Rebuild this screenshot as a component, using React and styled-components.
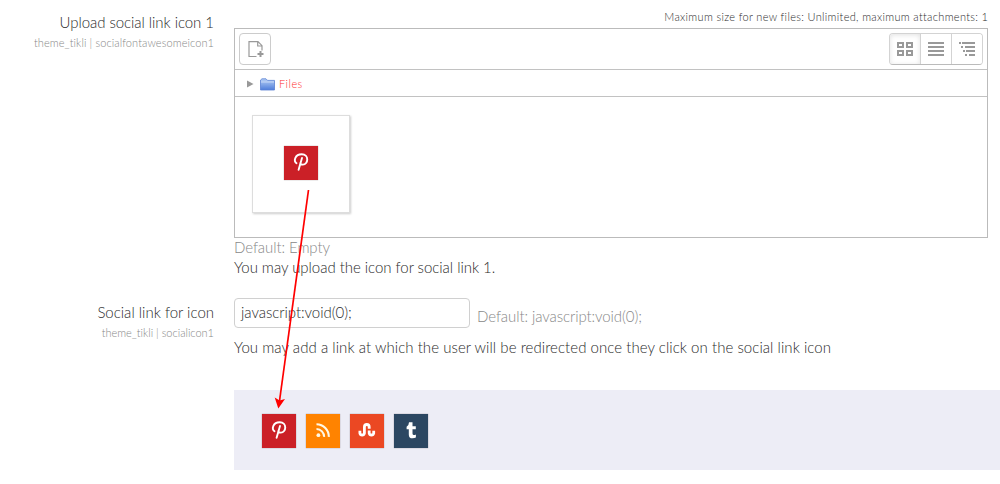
import React from "react";
import styled, { createGlobalStyle } from "styled-components";

const Global = createGlobalStyle`
  * { box-sizing: border-box; }
  html, body { margin: 0; background: #fff; }
  body {
    font-family: Lato, "Open Sans", sans-serif;
    font-weight: 300;
    font-size: 15px;
    font-variant-ligatures: none;
    color: #333;
    overflow: hidden;
  }
`;

const Page = styled.main`
  position: relative;
  width: 1000px;
  height: 484px;
  overflow: hidden;
`;

const Setting = styled.section`
  display: grid;
  grid-template-columns: 214px 754px;
  column-gap: 20px;
  height: ${(p) => p.$height}px;
`;

const LabelColumn = styled.div`
  padding-top: ${(p) => p.$top}px;
  text-align: right;
`;

const Line = styled.div`
  height: ${(p) => p.$height || 20}px;
  line-height: ${(p) => p.$height || 20}px;
  white-space: nowrap;
`;

const Text = styled.span`
  display: inline-block;
  letter-spacing: ${(p) => p.$track || 0}px;
  margin-right: ${(p) => -(p.$track || 0)}px;
  font-size: ${(p) => (p.$small ? 11 : 15)}px;
  color: ${(p) => p.$color || "#2b2b2b"};
  white-space: nowrap;
`;

const Restrictions = styled.div`
  height: 28px;
  padding-top: 5px;
  line-height: 20px;
  text-align: right;
`;

const FileManager = styled.div`
  height: 210px;
  margin-bottom: -1px;
  border: 1px solid #bbb;
`;

const Toolbar = styled.div`
  display: flex;
  justify-content: space-between;
  height: 41px;
  padding: 4px;
  border-bottom: 1px solid #c2c2c2;
`;

const AddButton = styled.button`
  display: flex;
  align-items: center;
  justify-content: center;
  width: 32px;
  height: 32px;
  padding: 0 0 0 1px;
  background: #fff;
  border: 1px solid #ccc;
  border-radius: 4px;
`;

const ViewGroup = styled.div`
  display: flex;
  width: 94px;
  height: 32px;
  border: 1px solid #d3d3d3;
  border-bottom-color: #bbb;
  border-radius: 4px;
  overflow: hidden;
`;

const ViewButton = styled.button`
  display: flex;
  flex: 1;
  align-items: center;
  justify-content: center;
  padding: 0;
  border: 0;
  background: #fff;
  box-shadow: ${(p) => (p.$active ? "inset 0 1px 5px rgba(0,0,0,.12)" : "none")};
  & + & { border-left: 1px solid #d3d3d3; }
`;

const PathBar = styled.div`
  display: flex;
  align-items: center;
  height: 27px;
  padding: 2px 0 0 12px;
  line-height: 16px;
  border-bottom: 1px solid #c2c2c2;
`;

const FolderLabel = styled.div`
  padding-bottom: 2px;
`;

const Folder = styled.svg`
  margin: 0 4px 0 6px;
`;

const FileArea = styled.div`
  padding: 18px 17px;
`;

const Thumbnail = styled.div`
  display: flex;
  align-items: center;
  justify-content: center;
  width: 98px;
  height: 98px;
  padding: 0 1px 2px 0;
  border: 1px solid #ddd;
  box-shadow: 1px 1px 2px rgba(0, 0, 0, 0.2);
`;

const InputRow = styled.div`
  display: flex;
  gap: 7px;
  height: 30px;
`;

const Field = styled.div`
  width: 236px;
  height: 30px;
  padding-left: 6px;
  line-height: 26px;
  border: 1px solid #d0d0d0;
  border-radius: 4px;
`;

const Hint = styled.div`
  padding-top: 8px;
  line-height: 20px;
`;

const Description = styled.div`
  padding-top: 9px;
  line-height: 20px;
`;

const Band = styled.footer`
  display: flex;
  gap: 10px;
  height: 80px;
  margin-left: 234px;
  padding: 24px 28px;
  background: #ededf6;
`;

const Tile = styled.svg`
  display: block;
  width: 34px;
  height: 34px;
  background: ${(p) => p.$color};
  box-shadow: 0 0 1px rgba(80, 60, 60, 0.6);
`;

const Arrow = styled.svg`
  position: absolute;
  left: 0;
  top: 0;
  pointer-events: none;
`;

const Pinterest = () => (
  <Tile $color="#cb2027" viewBox="0 0 34 34">
    <path
      d="M12.5 17.3 C9.3 15 11 8.3 17.7 8.3 C25.4 8.3 24.4 18.6 18.8 18.6 C17.5 18.6 16.4 17.8 16.3 17.1 M18 12 L14.6 23.8"
      fill="none"
      stroke="#fff"
      strokeWidth="1.9"
      strokeLinecap="round"
    />
  </Tile>
);

const Rss = () => (
  <Tile $color="#ff8300" viewBox="0 0 34 34">
    <circle cx="12.4" cy="21.2" r="1.9" fill="#fff8e5" />
    <path
      d="M10.5 15 A7.7 7.7 0 0 1 18.1 22.9 M10.5 10.2 A12.4 12.4 0 0 1 22.8 22.9"
      fill="none"
      stroke="#fff8e5"
      strokeWidth="2.1"
    />
  </Tile>
);

const StumbleUpon = () => (
  <Tile $color="#eb4823" viewBox="0 0 34 34">
    <path
      d="M9.9 16.8 V19.2 A2.3 2.3 0 0 0 14.4 19.2 V12.9 A2.4 2.4 0 0 1 19.2 12.9 V14.8 M19.2 16.4 V19.2 A2.3 2.3 0 0 0 23.7 19.2 V16.8"
      fill="none"
      stroke="#fff"
      strokeWidth="2.8"
    />
  </Tile>
);

const Tumblr = () => (
  <Tile $color="#2c4762" viewBox="0 0 34 34">
    <path
      d="M15 8.3 H18.5 V12.3 H21.8 V15.3 H18.5 V19.4 Q18.5 21.1 20 21.1 Q20.9 21.1 21.9 20.6 V23.6 Q20.6 24.3 18.5 24.3 Q14.8 24.3 14.8 20.4 V15.3 H12.6 V12.8 Q14.9 11.8 15 8.3 Z"
      fill="#fff"
    />
  </Tile>
);

const AddIcon = () => (
  <svg width="16" height="17" viewBox="0 0 16 17">
    <path d="M8.5 15.5 H1 V.7 H10 L14 4.7 V9.5 M9.7 1 V5 H14" fill="none" stroke="#999" strokeWidth="1.2" />
    <path d="M12.5 10 V16 M9.5 13 H15.5" stroke="#999" strokeWidth="2" />
  </svg>
);

const GridIcon = () => (
  <svg width="16" height="14" fill="none" stroke="#999" strokeWidth="2">
    <path d="M1 1H6V5H1Z M10 1H15V5H10Z M1 9H6V13H1Z M10 9H15V13H10Z" />
  </svg>
);

const ListIcon = () => (
  <svg width="16" height="14" stroke="#999" strokeWidth="2">
    <path d="M0 1H16 M0 5H16 M0 9H16 M0 13H16" />
  </svg>
);

const TreeIcon = () => (
  <svg width="16" height="14" stroke="#999" strokeWidth="2">
    <path d="M0 1H2 M3 1H16 M2 5H4 M6 5H16 M4 9H6 M7 9H16 M6 13H8 M10 13H16" />
  </svg>
);

export default function App() {
  return (
    <Page>
      <Global />
      <Setting $height={298}>
        <LabelColumn $top={12}>
          <Line><Text $track={-0.06}>Upload social link icon 1</Text></Line>
          <Line $height={19}><Text $small $track={0.1} $color="#888">theme_tikli | socialfontawesomeicon1</Text></Line>
        </LabelColumn>
        <div>
          <Restrictions>
            <Text $small $track={0.33}>Maximum size for new files: Unlimited, maximum attachments: 1</Text>
          </Restrictions>
          <FileManager>
            <Toolbar>
              <AddButton aria-label="Add"><AddIcon /></AddButton>
              <ViewGroup>
                <ViewButton $active aria-label="Icons"><GridIcon /></ViewButton>
                <ViewButton aria-label="List"><ListIcon /></ViewButton>
                <ViewButton aria-label="Tree"><TreeIcon /></ViewButton>
              </ViewGroup>
            </Toolbar>
            <PathBar>
              <svg width="7" height="8"><path d="M0 .5 L6.5 4 L0 7.5Z" fill="#999" /></svg>
              <Folder width="15" height="13" viewBox="0 0 15 13">
                <defs>
                  <linearGradient id="folder" x2="0" y2="1">
                    <stop stopColor="#b7d0f5" />
                    <stop offset="1" stopColor="#4f7edb" />
                  </linearGradient>
                </defs>
                <path d="M.5 2 L2 .8 H6 L7.5 2.4 H14.5 V12 H.5Z" fill="url(#folder)" stroke="#5a82d3" strokeWidth=".8" />
                <path d="M1 4H14" stroke="#d3e2fa" strokeWidth=".8" />
              </Folder>
              <FolderLabel><Text $small $track={0.45} $color="#ff1f2c">Files</Text></FolderLabel>
            </PathBar>
            <FileArea>
              <Thumbnail><Pinterest /></Thumbnail>
            </FileArea>
          </FileManager>
          <Line><Text $track={-0.08} $color="#888">Default: Empty</Text></Line>
          <Line><Text $track={-0.04}>You may upload the icon for social link 1.</Text></Line>
        </div>
      </Setting>
      <Setting $height={92}>
        <LabelColumn $top={4}>
          <Line><Text>Social link for icon</Text></Line>
          <Line $height={19}><Text $small $color="#888">theme_tikli | socialicon1</Text></Line>
        </LabelColumn>
        <div>
          <InputRow>
            <Field><Text $track={-0.05}>javascript:void(0);</Text></Field>
            <Hint><Text $track={-0.09} $color="#888">Default: javascript:void(0);</Text></Hint>
          </InputRow>
          <Description>
            <Text $track={0.05}>You may add a link at which the user will be redirected once they click on the social link icon</Text>
          </Description>
        </div>
      </Setting>
      <Band>
        <Pinterest />
        <Rss />
        <StumbleUpon />
        <Tumblr />
      </Band>
      <Arrow width="1000" height="484">
        <path d="M308.5 190 L279.5 401" stroke="#f00" strokeWidth="1.7" />
        <path d="M278.3 408.5 L274.7 397.5 L279.6 400.5 L285 399Z" fill="#f00" />
      </Arrow>
    </Page>
  );
}
